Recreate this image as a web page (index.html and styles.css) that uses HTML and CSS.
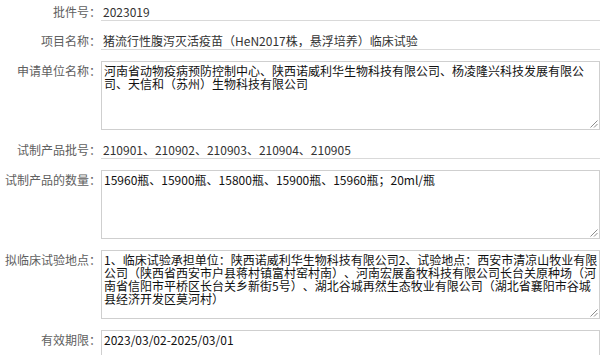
FILE: index.html
```html
<!DOCTYPE html>
<html lang="zh-CN">
<head>
<meta charset="utf-8">
<title>批件信息</title>
<link rel="stylesheet" href="styles.css">
</head>
<body>
<form class="form">
  <div class="row">
    <label class="label">批件号：</label>
    <input class="input" type="text" value="2023019">
  </div>
  <div class="row">
    <label class="label">项目名称：</label>
    <input class="input" type="text" value="猪流行性腹泻灭活疫苗（HeN2017株，悬浮培养）临床试验">
  </div>
  <div class="row row-top">
    <label class="label">申请单位名称：</label>
    <div class="ta-wrap">
      <textarea class="ta ta-narrow">河南省动物疫病预防控制中心、陕西诺威利华生物科技有限公司、杨凌隆兴科技发展有限公司、天信和（苏州）生物科技有限公司</textarea>
      <svg class="grip" width="8" height="8" viewBox="0 0 8 8"><path d="M7.5 0.5L0.5 7.5M7.5 4L4 7.5" stroke="#8c8c8c" stroke-width="1" fill="none"/></svg>
    </div>
  </div>
  <div class="row">
    <label class="label">试制产品批号：</label>
    <input class="input" type="text" value="210901、210902、210903、210904、210905">
  </div>
  <div class="row row-top">
    <label class="label">试制产品的数量：</label>
    <div class="ta-wrap">
      <textarea class="ta">15960瓶、15900瓶、15800瓶、15900瓶、15960瓶；20ml/瓶</textarea>
      <svg class="grip" width="8" height="8" viewBox="0 0 8 8"><path d="M7.5 0.5L0.5 7.5M7.5 4L4 7.5" stroke="#8c8c8c" stroke-width="1" fill="none"/></svg>
    </div>
  </div>
  <div class="row row-top">
    <label class="label">拟临床试验地点：</label>
    <div class="ta-wrap">
      <textarea class="ta">1、临床试验承担单位：陕西诺威利华生物科技有限公司2、试验地点：西安市清凉山牧业有限公司（陕西省西安市户县蒋村镇富村窑村南）、河南宏展畜牧科技有限公司长台关原种场（河南省信阳市平桥区长台关乡新街5号）、湖北谷城再然生态牧业有限公司（湖北省襄阳市谷城县经济开发区莫河村）</textarea>
      <svg class="grip" width="8" height="8" viewBox="0 0 8 8"><path d="M7.5 0.5L0.5 7.5M7.5 4L4 7.5" stroke="#8c8c8c" stroke-width="1" fill="none"/></svg>
    </div>
  </div>
  <div class="row row-top">
    <label class="label">有效期限：</label>
    <div class="ta-wrap">
      <textarea class="ta">2023/03/02-2025/03/01</textarea>
      <svg class="grip" width="8" height="8" viewBox="0 0 8 8"><path d="M7.5 0.5L0.5 7.5M7.5 4L4 7.5" stroke="#8c8c8c" stroke-width="1" fill="none"/></svg>
    </div>
  </div>
</form>
</body>
</html>
```

FILE: styles.css
```css
html, body {
  margin: 0;
  padding: 0;
  background: #fff;
}

body {
  font-family: "Noto Sans CJK SC", "Liberation Sans", sans-serif;
  font-size: 12px;
  color: #333;
}

.form {
  display: flex;
  flex-direction: column;
  gap: 11px;
  padding: 3px 9px 0 0;
}

.row {
  display: flex;
  align-items: center;
}

.row-top {
  align-items: flex-start;
}

.label {
  flex: none;
  width: 101px;
  text-align: right;
  color: #606060;
  line-height: 18px;
  white-space: nowrap;
}

.row-top .label {
  line-height: 13px;
  padding-top: 3px;
}

.input {
  box-sizing: border-box;
  width: 499px;
  height: 18px;
  margin: 0;
  padding: 0 2px;
  border: 0;
  border-bottom: 1px solid #d9d9d9;
  outline: none;
  background: transparent;
  font-family: "Noto Sans CJK SC", "Liberation Sans", sans-serif;
  font-size: 12px;
  color: #333;
}

.ta-wrap {
  position: relative;
  display: flex;
}

.ta {
  box-sizing: border-box;
  width: 499px;
  height: 69px;
  margin: 0;
  padding: 2px 0 2px 2px;
  border: 1px solid #cfcfcf;
  outline: none;
  background: #fff;
  font-family: "Noto Sans CJK SC", "Liberation Sans", sans-serif;
  font-size: 12px;
  line-height: 13px;
  color: #111;
  text-spacing-trim: space-all;
  resize: none;
  overflow: hidden;
}

.ta-narrow {
  padding-right: 10px;
}

.grip {
  position: absolute;
  right: 2px;
  bottom: 2px;
}
```
